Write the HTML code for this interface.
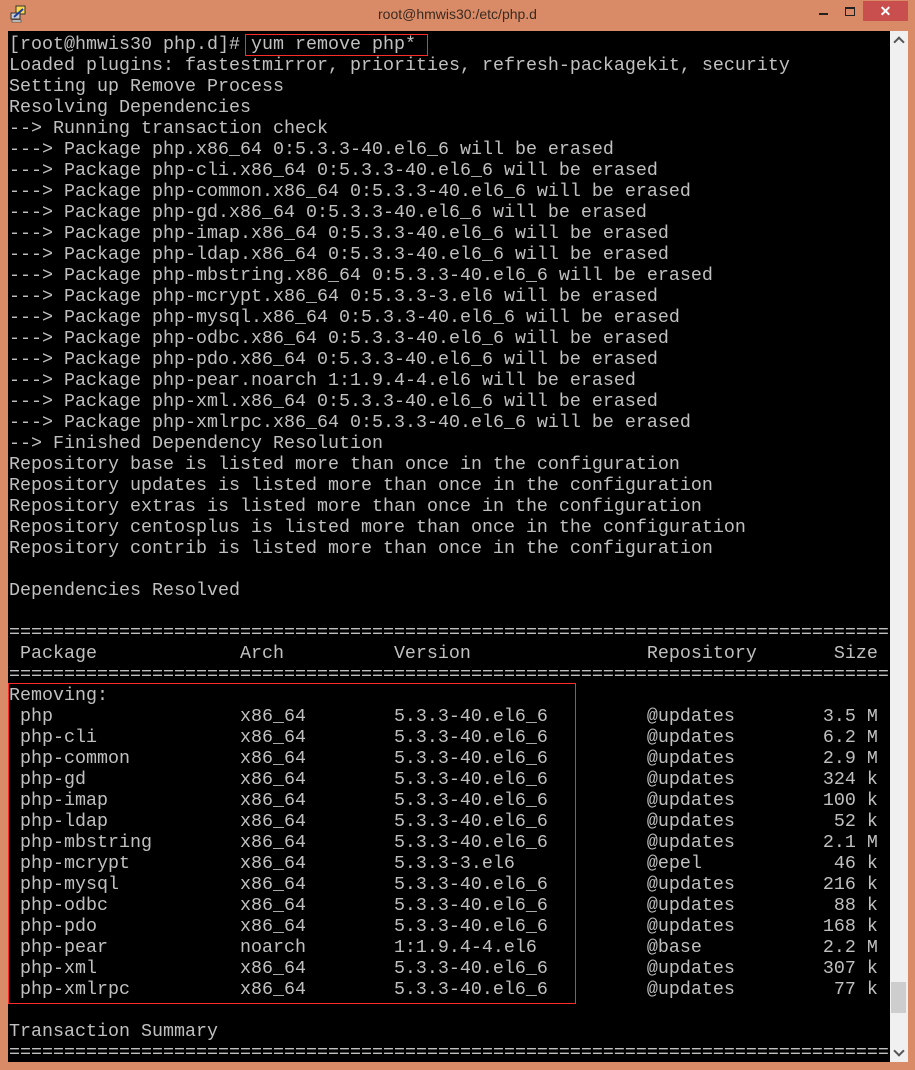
<!DOCTYPE html>
<html><head><meta charset="utf-8"><style>
html,body{margin:0;padding:0;width:915px;height:1070px;overflow:hidden;background:#d98b67;}
#term{position:absolute;left:8px;top:31px;width:882px;height:1031px;background:#000;overflow:hidden;}
pre{position:absolute;left:1px;top:3px;margin:0;font-family:"Liberation Mono",monospace;font-size:18.33px;line-height:21px;color:#c0c0c0;white-space:pre;}
.n{display:inline-block;width:20ch}.a{display:inline-block;width:14ch}.v{display:inline-block;width:23ch}.r{display:inline-block;width:8ch}.s{display:inline-block;width:13ch;text-align:right}
.box{position:absolute;border:1px solid #ff2a2a;box-sizing:border-box;z-index:5;}
#title{position:absolute;left:0;width:915px;top:6px;text-align:center;font-family:"Liberation Sans",sans-serif;font-size:14px;color:#3a2a20;}
#sb{position:absolute;left:890px;top:31px;width:18px;height:1031px;background:#f0f0f0;}
</style></head><body>
<div id="title">root@hmwis30:/etc/php.d</div>
<svg style="position:absolute;left:10px;top:5px" width="18" height="18" viewBox="0 0 18 18"><rect x="6" y="1" width="9" height="8" fill="#ffd84a" stroke="#333"/><rect x="1" y="8" width="9" height="6" fill="#ccc" stroke="#333"/><path d="M4 12 L13 4" stroke="#1a3fa0" stroke-width="2"/><rect x="2" y="15" width="9" height="2" fill="#eee" stroke="#333" stroke-width=".6"/></svg>
<div style="position:absolute;left:819px;top:13px;width:9px;height:2px;background:#222"></div>
<div style="position:absolute;left:845px;top:7px;width:8px;height:6px;border:1px solid #222;border-top-width:2px"></div>
<div style="position:absolute;left:863px;top:1px;width:45px;height:20px;background:#c94f4f;color:#fff;font:bold 14px 'Liberation Sans',sans-serif;text-align:center;line-height:20px">✕</div>
<div id="term"><pre>[root@hmwis30 php.d]# yum remove php*
Loaded plugins: fastestmirror, priorities, refresh-packagekit, security
Setting up Remove Process
Resolving Dependencies
--&gt; Running transaction check
---&gt; Package php.x86_64 0:5.3.3-40.el6_6 will be erased
---&gt; Package php-cli.x86_64 0:5.3.3-40.el6_6 will be erased
---&gt; Package php-common.x86_64 0:5.3.3-40.el6_6 will be erased
---&gt; Package php-gd.x86_64 0:5.3.3-40.el6_6 will be erased
---&gt; Package php-imap.x86_64 0:5.3.3-40.el6_6 will be erased
---&gt; Package php-ldap.x86_64 0:5.3.3-40.el6_6 will be erased
---&gt; Package php-mbstring.x86_64 0:5.3.3-40.el6_6 will be erased
---&gt; Package php-mcrypt.x86_64 0:5.3.3-3.el6 will be erased
---&gt; Package php-mysql.x86_64 0:5.3.3-40.el6_6 will be erased
---&gt; Package php-odbc.x86_64 0:5.3.3-40.el6_6 will be erased
---&gt; Package php-pdo.x86_64 0:5.3.3-40.el6_6 will be erased
---&gt; Package php-pear.noarch 1:1.9.4-4.el6 will be erased
---&gt; Package php-xml.x86_64 0:5.3.3-40.el6_6 will be erased
---&gt; Package php-xmlrpc.x86_64 0:5.3.3-40.el6_6 will be erased
--&gt; Finished Dependency Resolution
Repository base is listed more than once in the configuration
Repository updates is listed more than once in the configuration
Repository extras is listed more than once in the configuration
Repository centosplus is listed more than once in the configuration
Repository contrib is listed more than once in the configuration

Dependencies Resolved

================================================================================
 <span class="n">Package</span><span class="a">Arch</span><span class="v">Version</span><span class="r">Repository</span><span class="s">Size</span>
================================================================================
Removing:
 <span class="n">php</span><span class="a">x86_64</span><span class="v">5.3.3-40.el6_6</span><span class="r">@updates</span><span class="s">3.5 M</span>
 <span class="n">php-cli</span><span class="a">x86_64</span><span class="v">5.3.3-40.el6_6</span><span class="r">@updates</span><span class="s">6.2 M</span>
 <span class="n">php-common</span><span class="a">x86_64</span><span class="v">5.3.3-40.el6_6</span><span class="r">@updates</span><span class="s">2.9 M</span>
 <span class="n">php-gd</span><span class="a">x86_64</span><span class="v">5.3.3-40.el6_6</span><span class="r">@updates</span><span class="s">324 k</span>
 <span class="n">php-imap</span><span class="a">x86_64</span><span class="v">5.3.3-40.el6_6</span><span class="r">@updates</span><span class="s">100 k</span>
 <span class="n">php-ldap</span><span class="a">x86_64</span><span class="v">5.3.3-40.el6_6</span><span class="r">@updates</span><span class="s">52 k</span>
 <span class="n">php-mbstring</span><span class="a">x86_64</span><span class="v">5.3.3-40.el6_6</span><span class="r">@updates</span><span class="s">2.1 M</span>
 <span class="n">php-mcrypt</span><span class="a">x86_64</span><span class="v">5.3.3-3.el6</span><span class="r">@epel</span><span class="s">46 k</span>
 <span class="n">php-mysql</span><span class="a">x86_64</span><span class="v">5.3.3-40.el6_6</span><span class="r">@updates</span><span class="s">216 k</span>
 <span class="n">php-odbc</span><span class="a">x86_64</span><span class="v">5.3.3-40.el6_6</span><span class="r">@updates</span><span class="s">88 k</span>
 <span class="n">php-pdo</span><span class="a">x86_64</span><span class="v">5.3.3-40.el6_6</span><span class="r">@updates</span><span class="s">168 k</span>
 <span class="n">php-pear</span><span class="a">noarch</span><span class="v">1:1.9.4-4.el6</span><span class="r">@base</span><span class="s">2.2 M</span>
 <span class="n">php-xml</span><span class="a">x86_64</span><span class="v">5.3.3-40.el6_6</span><span class="r">@updates</span><span class="s">307 k</span>
 <span class="n">php-xmlrpc</span><span class="a">x86_64</span><span class="v">5.3.3-40.el6_6</span><span class="r">@updates</span><span class="s">77 k</span>

Transaction Summary
================================================================================</pre>
<div class="box" style="left:237px;top:3px;width:183px;height:22px"></div>
<div class="box" style="left:0px;top:652px;width:568px;height:321px"></div>
</div>
<div id="sb">
<div style="position:absolute;left:5px;top:7px;width:6px;height:6px;border-left:2px solid #555;border-top:2px solid #555;transform:rotate(45deg)"></div>
<div style="position:absolute;left:1px;top:951px;width:15px;height:31px;background:#cdcdcd"></div>
<div style="position:absolute;left:5px;top:1016px;width:6px;height:6px;border-right:2px solid #555;border-bottom:2px solid #555;transform:rotate(45deg)"></div>
</div>
</body></html>
